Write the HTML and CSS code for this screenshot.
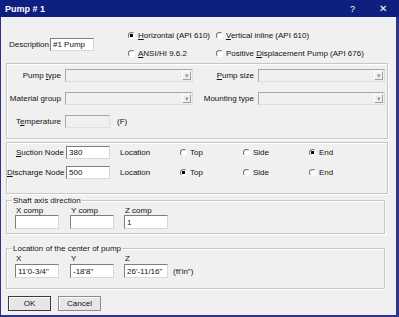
FILE: index.html
```html
<!DOCTYPE html>
<html lang="en">
<head>
  <meta charset="UTF-8">
  <title>Pump # 1</title>
  <link rel="stylesheet" href="styles.css">
</head>
<body>

  <!-- Title bar -->
  <div class="titlebar">
    <span class="title">Pump # 1</span>
    <span class="help">?</span>
    <span class="close">&#x2715;</span>
  </div>

  <div class="frame">

    <!-- Description + pump kind -->
    <div class="top">
      <div class="desc"><span class="desc-label">Description</span><input class="edit desc-edit" value="#1 Pump"></div>
      <label class="opt"><span class="radio on"></span><span><u>H</u>orizontal (API 610)</span></label>
      <label class="opt"><span class="radio"></span><span><u>V</u>ertical inline (API 610)</span></label>
      <label class="opt"><span class="radio"></span><span><u>A</u>NSI/HI 9.6.2</span></label>
      <label class="opt"><span class="radio"></span><span>Positive <u>D</u>isplacement Pump (API 676)</span></label>
    </div>

    <!-- Pump data -->
    <div class="group pumpbox">
      <span class="lbl">Pump <u>t</u>ype</span>
      <div class="combo"><span class="drop">&#x25BE;</span></div>
      <span class="lbl"><u>P</u>ump size</span>
      <div class="combo"><span class="drop">&#x25BE;</span></div>
      <span class="lbl">Material group</span>
      <div class="combo"><span class="drop">&#x25BE;</span></div>
      <span class="lbl">Mounting type</span>
      <div class="combo"><span class="drop">&#x25BE;</span></div>
      <span class="lbl">T<u>e</u>mperature</span>
      <div class="temp"><span class="edit off temp-edit"></span><span class="unit">(F)</span></div>
    </div>

    <!-- Nodes -->
    <div class="group nodebox">
      <span class="lbl"><u>S</u>uction Node</span>
      <input class="edit" value="380">
      <span class="loc">Location</span>
      <label class="opt"><span class="radio"></span>Top</label>
      <label class="opt"><span class="radio"></span>Side</label>
      <label class="opt"><span class="radio on"></span>End</label>

      <span class="lbl"><u>D</u>ischarge Node</span>
      <input class="edit" value="500">
      <span class="loc">Location</span>
      <label class="opt"><span class="radio on"></span>Top</label>
      <label class="opt"><span class="radio"></span>Side</label>
      <label class="opt"><span class="radio"></span>End</label>
    </div>

    <!-- Shaft axis -->
    <fieldset class="box shaft">
      <legend>Shaft axis direction</legend>
      <div class="comps">
        <span>X comp</span><span>Y comp</span><span>Z comp</span>
        <input class="edit" value=""><input class="edit" value=""><input class="edit" value="1">
      </div>
    </fieldset>

    <!-- Pump center -->
    <fieldset class="box center">
      <legend>Location of the center of pump</legend>
      <div class="comps coords">
        <span>X</span><span>Y</span><span>Z</span><span></span>
        <input class="edit" value="11'0-3/4&quot;"><input class="edit" value="-18'8&quot;"><input class="edit" value="26'-11/16&quot;"><span class="unit">(ft'in")</span>
      </div>
    </fieldset>

    <div class="buttons">
      <button class="btn default">OK</button>
      <button class="btn">Cancel</button>
    </div>

  </div>

</body>
</html>
```

FILE: styles.css
```css
* { box-sizing: border-box; }
body { margin: 0; width: 399px; height: 317px; overflow: hidden; font-family: "Liberation Sans", Arial, sans-serif; font-size: 8px; color: #111; background: #f0f0f0; }

.titlebar { height: 17px; background: #0f1f7f; color: #fff; display: flex; align-items: center; padding-left: 5px; }
.title { font-weight: bold; font-size: 9px; }
.help { margin-left: auto; font-size: 9px; }
.close { margin-left: 24px; margin-right: 12px; font-size: 10px; }

.frame { height: 300px; background: #f0f0f0; border-left: 1px solid #2e338b; border-right: 3px solid #2e338b; border-bottom: 2px solid #2e338b; }

.top { display: grid; grid-template-columns: 119px 88px 1fr; grid-template-rows: 18px 18px; padding: 9px 0 0 8px; }
.desc { grid-row: 1 / 3; display: flex; align-items: center; }
.desc-label { width: 41px; }
.desc-edit { width: 65px; height: 14px; }

.opt { display: flex; align-items: center; gap: 3px; white-space: nowrap; }
.radio { width: 7px; height: 7px; border-radius: 50%; border: 1px solid; border-color: #6e6e6e #fff #fff #6e6e6e; background: #fff; flex: none; }
.radio.on { background: radial-gradient(circle, #000 0 1.5px, #fff 1.6px); }

.edit { font: inherit; color: #111; height: 13px; padding: 0 2px; background: #fff; border: 1px solid; border-color: #7e7e7e #d8d8d8 #d8d8d8 #7e7e7e; outline: none; width: 44px; }
.edit.off { background: #f0f0f0; border-color: #a8a8a8 #e0e0e0 #e0e0e0 #a8a8a8; }

.group { border: 1px solid #c6c6c6; box-shadow: inset 1px 1px #fff, 1px 1px #fff; margin: 0 8px 0 5px; }

.lbl { text-align: right; padding-right: 4px; white-space: nowrap; align-self: center; }

.pumpbox { margin-top: 1px; display: grid; grid-template-columns: 58px 128px 65px 127px; grid-template-rows: 13px 13px 13px; row-gap: 10px; padding: 5px 0 10px 0; }
.combo { height: 13px; border: 1px solid; border-color: #a8a8a8 #dedede #dedede #a8a8a8; background: #f0f0f0; display: flex; justify-content: flex-end; padding: 1px; }
.drop { width: 9px; border: 1px solid; border-color: #fff #a0a0a0 #a0a0a0 #fff; color: #9a9a9a; font-size: 7px; line-height: 8px; text-align: center; }
.temp { grid-column: 2 / 5; display: flex; align-items: center; }
.temp-edit { display: block; width: 45px; }
.unit { margin-left: 7px; }

.nodebox { margin-top: 3px; display: grid; grid-template-columns: 59px 44px 70px 63px 66px 1fr; grid-template-rows: 13px 13px; row-gap: 7px; padding: 3px 0 14px 0; }
.nodebox .lbl { padding-right: 2px; }
.loc { padding-left: 10px; align-self: center; }

.box { margin: 2px 11px 0 5px; padding: 0; border: 1px solid #c6c6c6; box-shadow: inset 1px 1px #fff, 1px 1px #fff; min-width: 0; }
.box legend { margin-left: 5px; padding: 0 1px; line-height: 9px; }
.comps { display: grid; grid-template-columns: 55px 54px 44px; grid-template-rows: 9px 14px; row-gap: 0; padding: 1px 0 4px 8px; line-height: 9px; }
.comps span { padding-left: 1px; }
.comps .edit { height: 14px; }
.center { margin-top: 10px; }
.coords { grid-template-columns: 55px 54px 44px auto; row-gap: 1px; padding-bottom: 10px; }
.coords .unit { margin-left: 4px; align-self: center; }

.buttons { display: flex; gap: 7px; padding: 7px 0 0 7px; }
.btn { font: inherit; color: #111; width: 43px; height: 15px; padding: 0; background: #e6e6e6; border: 1px solid #8c8c8c; box-shadow: inset 1px 1px #fff; }
.btn.default { border-color: #3c3c3c; }
```
